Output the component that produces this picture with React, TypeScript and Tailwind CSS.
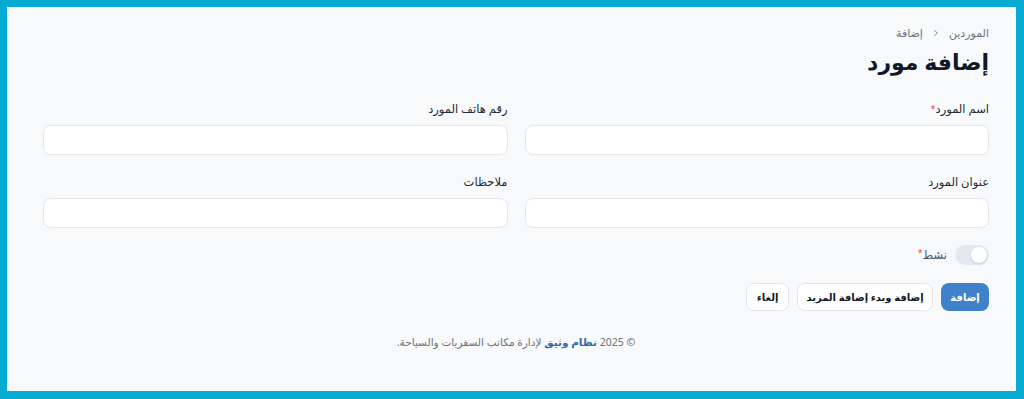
import React from "react";

const font = { fontFamily: '"Noto Sans", "DejaVu Sans", sans-serif' };

function Field({ label, required }: { label: string; required?: boolean }) {
  return (
    <div className="flex flex-col">
      <label className="text-[11.5px] leading-[16px] text-[#1f2937] mb-[8px]">
        {label}
        {required && <span className="text-[#ef4444] text-[9px] align-top">*</span>}
      </label>
      <input className="h-[30px] w-full rounded-[8px] border border-[#e3e6eb] bg-white outline-none" />
    </div>
  );
}

export default function App() {
  return (
    <div
      dir="rtl"
      style={font}
      className="w-[1024px] h-[399px] border-t-[7px] border-l-[7px] border-r-[8px] border-b-[8px] border-[#03acd0] bg-[#f8f9fb]"
    >
      <div className="pr-[27px] pl-[36px] pt-[19px]">
        <div className="flex items-center gap-[8px] text-[11px] leading-[14px] text-[#6b7280]">
          <span>الموردين</span>
          <svg width="10" height="10" viewBox="0 0 24 24" fill="none" stroke="#6b7280" strokeWidth="2.2" strokeLinecap="round" strokeLinejoin="round">
            <path d="M9 18l6-6-6-6" />
          </svg>
          <span>إضافة</span>
        </div>
        <h1 className="mt-[7px] text-[22px] leading-[28px] font-bold text-[#111827]">إضافة مورد</h1>

        <div className="mt-[26px] grid grid-cols-2 gap-x-[17px] gap-y-[19px]">
          <Field label="اسم المورد" required />
          <Field label="رقم هاتف المورد" />
          <Field label="عنوان المورد" />
          <Field label="ملاحظات" />
        </div>

        <div className="mt-[17px] flex items-center gap-[8px]">
          <div className="w-[34px] h-[20px] rounded-full bg-[#e4e8ef] flex items-center justify-start pr-[2px]">
            <div className="w-[16px] h-[16px] rounded-full bg-white shadow-sm" />
          </div>
          <span className="text-[11.5px] text-[#4b5563]">
            نشط<span className="text-[#ef4444] text-[9px] align-top">*</span>
          </span>
        </div>

        <div className="mt-[18px] flex items-center gap-[8px]">
          <button className="h-[28px] w-[48px] flex items-center justify-center rounded-[8px] bg-[#3f82cb] text-white text-[10px] font-bold">إضافة</button>
          <button className="h-[28px] w-[136px] flex items-center justify-center rounded-[8px] bg-white border border-[#e3e6eb] text-[#111827] text-[10px] font-bold">إضافة وبدء إضافة المزيد</button>
          <button className="h-[28px] w-[43px] flex items-center justify-center rounded-[8px] bg-white border border-[#e3e6eb] text-[#111827] text-[10px] font-bold">إلغاء</button>
        </div>

        <div className="mt-[24px] text-center text-[10.5px] leading-[14px] text-[#6b7280]">
          © 2025 <span className="font-bold text-[#2b6cb0]">نظام وثيق</span> لإدارة مكاتب السفريات والسياحة.
        </div>
      </div>
    </div>
  );
}
